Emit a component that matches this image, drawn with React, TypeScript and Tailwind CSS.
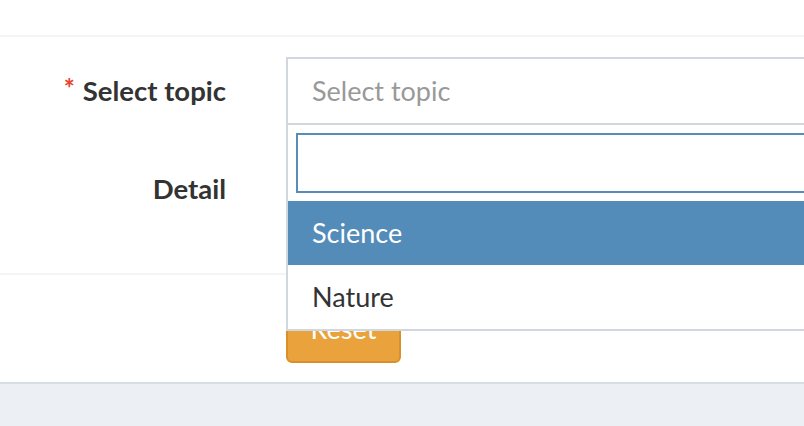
import React from "react";

export default function App() {
  return (
    <div
      className="h-[426px] w-[804px] overflow-hidden bg-[#ecf0f5]"
      style={{ fontFamily: "Lato, 'Noto Sans', sans-serif" }}
    >
      <div className="bg-white border-b-2 border-[#d8dce3]">
        <div className="h-[37px] border-b-2 border-[#f4f4f4]" />
        <div className="pt-[20px] pb-[20px]">
          <div className="grid grid-cols-[256px_1fr] mb-[30px]">
            <label className="pr-[30px] text-right h-[68px] flex items-center justify-end text-[27.5px] font-bold text-[#333]">
              <span className="text-[#e8412c] text-[26px] font-bold mr-[8px] -mt-[6px]">*</span>
              Select topic
            </label>
            <div className="pl-[30px] relative">
              <div className="h-[68px] border-2 border-[#d2d6de] flex items-center pl-[24px] text-[27px] text-[#999] w-[560px]">
                Select topic
              </div>
              <div className="absolute left-[30px] top-[68px] w-[560px] bg-white border-2 border-t-0 border-[#d2d6de] z-10">
                <div className="p-[8px]">
                  <div className="h-[60px] border-2 border-[#5a8cb8] bg-white" />
                </div>
                <div className="h-[64px] bg-[#538bb9] text-white text-[27px] flex items-center px-[24px]">
                  Science
                </div>
                <div className="h-[64px] text-[#333] text-[27px] flex items-center px-[24px]">
                  Nature
                </div>
              </div>
            </div>
          </div>
          <div className="grid grid-cols-[256px_1fr] mb-[30px]">
            <label className="pr-[30px] h-[68px] flex items-center justify-end text-[27.5px] font-bold text-[#333]">
              Detail
            </label>
            <div className="pl-[30px]">
              <div className="h-[68px] border-2 border-[#d2d6de] w-[560px]" />
            </div>
          </div>
        </div>
        <div className="border-t-2 border-[#f4f4f4] pt-[20px] pb-[19px] pl-[286px]">
          <button className="h-[68px] w-[115px] rounded-[6px] bg-[#e9a23c] border-2 border-[#d9902a] text-white text-[27px]">
            Reset
          </button>
        </div>
      </div>
    </div>
  );
}
